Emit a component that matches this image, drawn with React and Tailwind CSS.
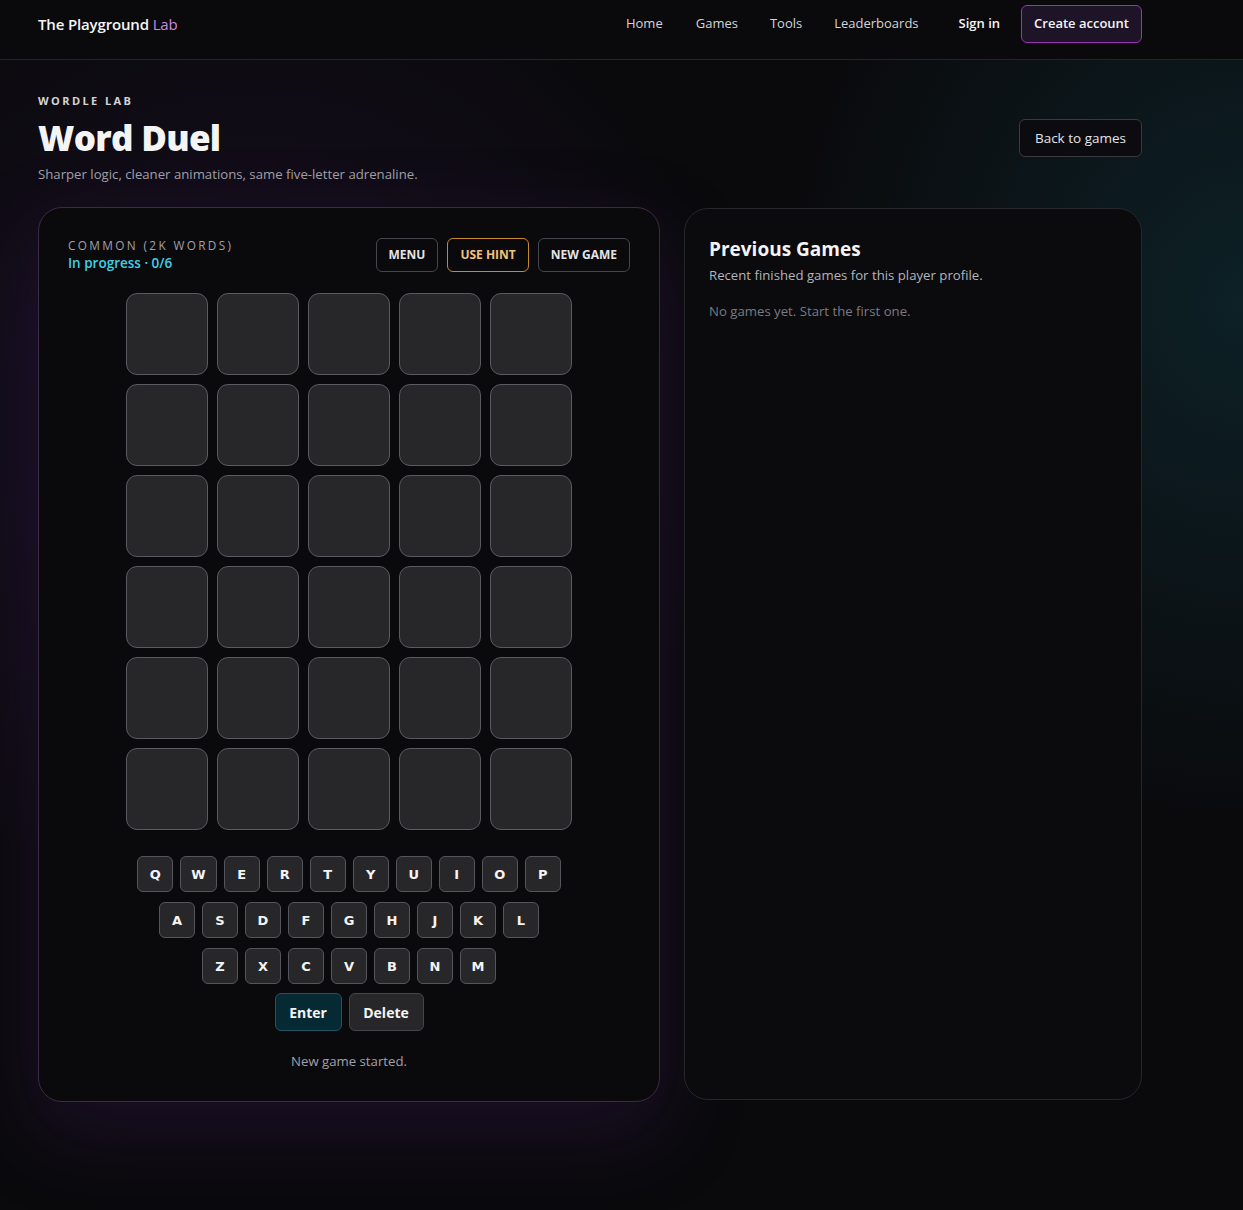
import React from "react";

const rows = ["QWERTYUIOP", "ASDFGHJKL", "ZXCVBNM"];

export default function App() {
  const font = { fontFamily: '"Open Sans", "Noto Sans", sans-serif' };
  return (
    <div
      className="min-h-[1210px] w-full bg-[#0a0a0d] text-[#f4f4f5] relative overflow-hidden"
      style={font}
    >
      <div className="pointer-events-none absolute inset-0 bg-[radial-gradient(ellipse_700px_700px_at_20%_35%,rgba(70,30,100,0.26),transparent_70%)]" />
      <div className="pointer-events-none absolute inset-0 bg-[radial-gradient(ellipse_650px_750px_at_100%_25%,rgba(20,85,95,0.3),transparent_70%)]" />
      <div className="relative">
        <header className="h-[60px] border-b border-[#24242a] bg-[#0a0a0d]">
          <div className="ml-[38px] w-[1104px] pt-[5px] flex items-center justify-between">
            <div className="text-[15px] font-semibold tracking-[-0.01em] text-[#f4f4f5]">
              The Playground <span className="font-normal text-[#c98be0]">Lab</span>
            </div>
            <nav className="flex items-center text-[13px]">
              <a className="text-[#d4d4d8] mr-[33px]">Home</a>
              <a className="text-[#d4d4d8] mr-[32px]">Games</a>
              <a className="text-[#d4d4d8] mr-[32px]">Tools</a>
              <a className="text-[#d4d4d8] mr-[40px]">Leaderboards</a>
              <a className="text-[#f4f4f5] font-semibold mr-[21px]">Sign in</a>
              <button className="h-[38px] px-[12px] rounded-[6px] border border-[#9b32b8] bg-[#1e1428] text-[13px] font-semibold text-[#f4f4f5]">
                Create account
              </button>
            </nav>
          </div>
        </header>

        <main className="ml-[38px] w-[1104px] pt-[33px]">
          <div className="flex items-start justify-between">
            <div>
              <div className="text-[11px] font-bold tracking-[0.22em] text-[#d4d4d8]">WORDLE LAB</div>
              <h1 className="mt-[8px] text-[35px] leading-[40px] tracking-[-0.02em] text-[#f4f4f5]" style={{ fontFamily: '"Open Sans", sans-serif', fontWeight: 800 }}>
                Word Duel
              </h1>
              <p className="mt-[7px] text-[13.2px] text-[#a1a1aa]">
                Sharper logic, cleaner animations, same five-letter adrenaline.
              </p>
            </div>
            <button className="mt-[26px] h-[38px] px-[15px] rounded-[6px] border border-[#3a3a42] bg-[#0c0c10] text-[13.5px] text-[#e4e4e7]">
              Back to games
            </button>
          </div>

          <div className="mt-[23px] flex gap-[24px] items-start">
            <section className="w-[622px] h-[895px] rounded-[24px] border border-[#3b2a45] bg-[#0a0a0d] px-[29px] pt-[28px] shadow-[0_30px_80px_rgba(60,25,85,0.35)]">
              <div className="flex items-start justify-between">
                <div>
                  <div className="text-[11.8px] tracking-[0.2em] text-[#a1a1aa] leading-[18px]">COMMON (2K WORDS)</div>
                  <div className="text-[13.5px] font-semibold text-[#3fd0e6] leading-[18px]">In progress · 0/6</div>
                </div>
                <div className="flex gap-[9px] mt-[2px]">
                  <button className="h-[34px] px-[12px] rounded-[6px] border border-[#45454d] text-[12px] font-bold text-[#e4e4e7]">MENU</button>
                  <button className="h-[34px] px-[12px] rounded-[6px] border border-[#c8892a] text-[12px] font-bold text-[#f0c27a]">USE HINT</button>
                  <button className="h-[34px] px-[12px] rounded-[6px] border border-[#45454d] text-[12px] font-bold text-[#e4e4e7]">NEW GAME</button>
                </div>
              </div>

              <div className="mt-[21px] mx-auto w-[446px] grid grid-cols-5 gap-[9px]">
                {Array.from({ length: 30 }).map((_, i) => (
                  <div key={i} className="h-[82px] rounded-[11px] border border-[#5a5a62] bg-[#27272a]" />
                ))}
              </div>

              <div className="mt-[26px] flex flex-col items-center gap-[10px]" style={{ fontFamily: '"DejaVu Sans", Verdana, sans-serif' }}>
                {rows.map((r) => (
                  <div key={r} className="flex gap-[7px]">
                    {r.split("").map((k) => (
                      <div
                        key={k}
                        className="h-[36px] min-w-[36px] px-[10px] flex items-center justify-center rounded-[6px] border border-[#55555d] bg-[#27272a] text-[13px] font-bold text-[#f4f4f5]"
                      >
                        {k}
                      </div>
                    ))}
                  </div>
                ))}
                <div className="flex gap-[7px] mt-[-1px]" style={font}>
                  <div className="h-[38px] w-[67px] flex items-center justify-center rounded-[6px] border border-[#1f5562] bg-[#062a33] text-[14px] font-bold text-[#f4f4f5]">Enter</div>
                  <div className="h-[38px] w-[75px] flex items-center justify-center rounded-[6px] border border-[#45454d] bg-[#27272a] text-[14px] font-bold text-[#f4f4f5]">Delete</div>
                </div>
              </div>

              <p className="mt-[21px] text-center text-[13.2px] text-[#a1a1aa]">New game started.</p>
            </section>

            <section className="w-[458px] h-[892px] mt-[1px] rounded-[24px] border border-[#26262d] bg-[#0b0b0e] px-[24px] pt-[27px]">
              <h2 className="text-[19px] font-bold text-[#f4f4f5] leading-[26px]">Previous Games</h2>
              <p className="mt-[4px] text-[13.2px] text-[#b4b4bb]">Recent finished games for this player profile.</p>
              <p className="mt-[16px] text-[13.2px] text-[#7a7a83]">No games yet. Start the first one.</p>
            </section>
          </div>
        </main>
      </div>
    </div>
  );
}
